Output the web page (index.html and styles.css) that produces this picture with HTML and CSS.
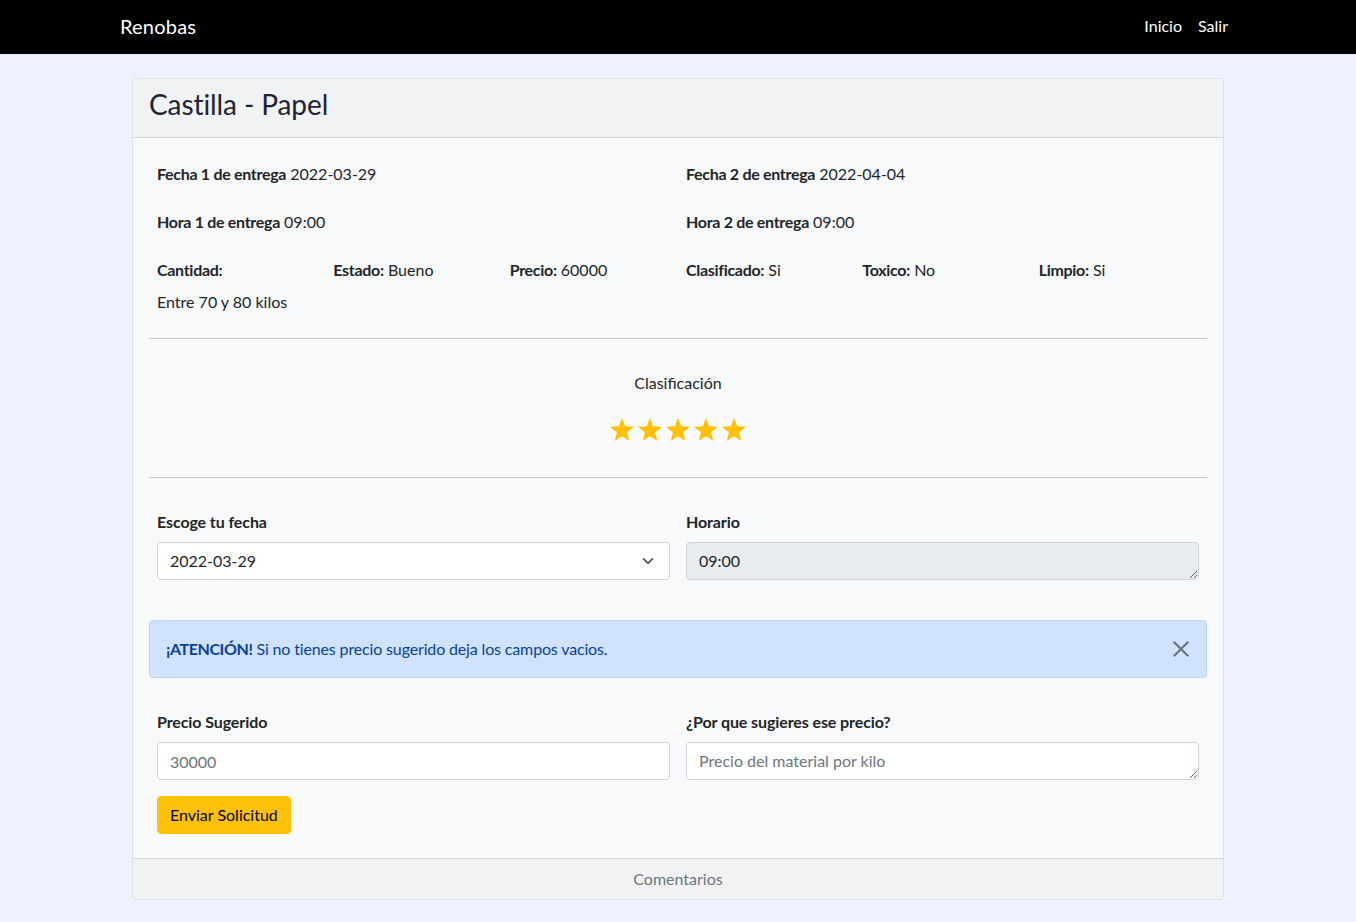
FILE: index.html
```html
<!DOCTYPE html>
<html lang="es">
<head>
<meta charset="utf-8">
<title>Renobas</title>
<link rel="stylesheet" href="styles.css">
</head>
<body>
<nav class="navbar">
  <div class="nav-inner">
    <a class="brand" href="#">Renobas</a>
    <div class="nav-links">
      <a href="#">Inicio</a>
      <a href="#">Salir</a>
    </div>
  </div>
</nav>

<main class="container">
  <section class="card">
    <header class="card-header"><h3>Castilla - Papel</h3></header>
    <div class="card-body">
      <div class="grid-2">
        <div class="cell"><b>Fecha 1 de entrega</b> 2022-03-29</div>
        <div class="cell"><b>Fecha 2 de entrega</b> 2022-04-04</div>
        <div class="cell"><b>Hora 1 de entrega</b> 09:00</div>
        <div class="cell"><b>Hora 2 de entrega</b> 09:00</div>
      </div>
      <div class="grid-6">
        <div class="cell"><b>Cantidad:</b><div class="sub">Entre 70 y 80 kilos</div></div>
        <div class="cell"><b>Estado:</b> Bueno</div>
        <div class="cell"><b>Precio:</b> 60000</div>
        <div class="cell"><b>Clasificado:</b> Si</div>
        <div class="cell"><b>Toxico:</b> No</div>
        <div class="cell"><b>Limpio:</b> Si</div>
      </div>
      <hr class="rule">
      <div class="rating">
        <div class="rating-label">Clasificación</div>
        <div class="stars">
          <svg viewBox="0 0 24 24" class="star"><polygon points="12,1 14.9,8.6 23,9 16.7,14.2 18.8,22.2 12,17.7 5.2,22.2 7.3,14.2 1,9 9.1,8.6"/></svg>
          <svg viewBox="0 0 24 24" class="star"><polygon points="12,1 14.9,8.6 23,9 16.7,14.2 18.8,22.2 12,17.7 5.2,22.2 7.3,14.2 1,9 9.1,8.6"/></svg>
          <svg viewBox="0 0 24 24" class="star"><polygon points="12,1 14.9,8.6 23,9 16.7,14.2 18.8,22.2 12,17.7 5.2,22.2 7.3,14.2 1,9 9.1,8.6"/></svg>
          <svg viewBox="0 0 24 24" class="star"><polygon points="12,1 14.9,8.6 23,9 16.7,14.2 18.8,22.2 12,17.7 5.2,22.2 7.3,14.2 1,9 9.1,8.6"/></svg>
          <svg viewBox="0 0 24 24" class="star"><polygon points="12,1 14.9,8.6 23,9 16.7,14.2 18.8,22.2 12,17.7 5.2,22.2 7.3,14.2 1,9 9.1,8.6"/></svg>
        </div>
      </div>
      <hr class="rule">
      <form class="form">
        <div class="form-row first">
          <div class="field">
            <label class="form-label">Escoge tu fecha</label>
            <div class="select-wrap">
              <select class="form-control select"><option>2022-03-29</option><option>2022-04-04</option></select>
              <svg class="chevron" viewBox="0 0 16 16"><path d="M2 5l6 6 6-6" fill="none" stroke="#343a40" stroke-width="2" stroke-linecap="round" stroke-linejoin="round"/></svg>
            </div>
          </div>
          <div class="field">
            <label class="form-label">Horario</label>
            <textarea class="form-control readonly" rows="1" readonly>09:00</textarea>
          </div>
        </div>

        <div class="alert">
          <span><b>¡ATENCIÓN!</b> Si no tienes precio sugerido deja los campos vacios.</span>
          <button type="button" class="btn-close" aria-label="Cerrar">
            <svg viewBox="0 0 16 16"><path d="M1.5 1.5l13 13M14.5 1.5l-13 13" stroke="#000" stroke-width="1.8" fill="none"/></svg>
          </button>
        </div>

        <div class="form-row">
          <div class="field">
            <label class="form-label">Precio Sugerido</label>
            <input class="form-control" type="text" placeholder="30000">
          </div>
          <div class="field">
            <label class="form-label">¿Por que sugieres ese precio?</label>
            <textarea class="form-control" rows="1" placeholder="Precio del material por kilo"></textarea>
          </div>
        </div>
        <div class="actions">
          <button type="button" class="btn-warning">Enviar Solicitud</button>
        </div>
      </form>
    </div>
    <footer class="card-footer">Comentarios</footer>
  </section>
</main>
</body>
</html>
```
FILE: styles.css
```css
* { box-sizing: border-box; }
html, body { margin: 0; padding: 0; }
body {
  background: #eef1ff;
  font-family: Lato, "Noto Sans", "Liberation Sans", sans-serif;
  font-size: 16px;
  line-height: 24px;
  color: #212529;
}
.navbar {
  background: #000;
  height: 54px;
}
.nav-inner {
  width: 1140px;
  margin: 0 auto;
  padding: 0 12px;
  height: 54px;
  display: flex;
  align-items: center;
  justify-content: space-between;
}
.brand {
  color: #fff;
  text-decoration: none;
  font-size: 20px;
  line-height: 30px;
  margin-top: -2px;
  letter-spacing: 0.2px;
}
.nav-links { display: flex; margin-top: -2px; }
.nav-links a {
  color: #fff;
  text-decoration: none;
  padding: 0 8px;
}
.container {
  width: 1140px;
  margin: 24px auto 0;
  padding: 0 24px;
}
.card {
  background: #f8f9fa;
  border: 1px solid rgba(0,0,0,0.1);
  border-radius: 4px;
}
.card-header {
  background: #f1f2f4;
  border-bottom: 1px solid rgba(0,0,0,0.12);
  padding: 5px 16px 0;
  height: 59px;
}
.card-header h3 {
  margin: 0;
  font-weight: 400;
  font-size: 28px;
  line-height: 40px;
  color: #1e2434;
  letter-spacing: -0.1px;
}
.card-body { padding: 16px 16px 24px; }
.grid-2 {
  display: grid;
  grid-template-columns: 1fr 1fr;
}
.grid-6 {
  display: grid;
  grid-template-columns: repeat(6, 1fr);
}
.cell {
  padding: 8px;
  margin-bottom: 8px;
}
.grid-6 .cell { margin-bottom: 0; padding-bottom: 16px; }
.cell b { font-weight: 700; letter-spacing: -0.3px; }
.sub { margin-top: 8px; }
.rule {
  border: 0;
  border-top: 1px solid #c8c9cb;
  margin: 8px 0 0;
}
.rating {
  text-align: center;
  padding: 32px 0 29px;
}
.rating-label { line-height: 24px; font-size: 16px; }
.stars {
  margin-top: 17px;
  height: 36px;
  display: flex;
  justify-content: center;
  align-items: center;
  gap: 2px;
}
.star { width: 26px; height: 26px; fill: #ffc107; }
.rating + .rule { margin-top: 0; }
.form { padding-top: 32px; }
.form-row {
  display: grid;
  grid-template-columns: 1fr 1fr;
}
.field { padding: 0 8px; }
.form-label {
  display: block;
  font-weight: 700;
  margin-bottom: 8px;
  letter-spacing: -0.1px;
}
.form-control {
  display: block;
  width: 100%;
  height: 38px;
  padding: 6px 12px;
  font: inherit;
  font-size: 16px;
  line-height: 24px;
  color: #212529;
  background: #fff;
  border: 1px solid #ced4da;
  border-radius: 4px;
  outline: none;
}
textarea.form-control { resize: vertical; min-height: 38px; }
.form-control::placeholder { color: #6c757d; opacity: 1; }
.readonly { background: #e9ecef; }
.select-wrap { position: relative; }
.select { appearance: none; -webkit-appearance: none; padding-right: 36px; }
.chevron {
  position: absolute;
  right: 16px;
  top: 13px;
  width: 12px;
  height: 12px;
  pointer-events: none;
}
.alert {
  margin-top: 40px;
  height: 58px;
  background: #cfe2ff;
  border: 1px solid #b6d4fe;
  border-radius: 4px;
  color: #084298;
  padding: 16px 16px;
  display: flex;
  align-items: center;
  justify-content: space-between;
  letter-spacing: -0.15px;
}
.alert b { font-weight: 700; letter-spacing: -0.4px; }
.btn-close {
  border: 0;
  background: none;
  padding: 0;
  width: 18px;
  height: 18px;
  margin-right: 0;
  opacity: 0.5;
  display: flex;
}
.btn-close svg { width: 18px; height: 18px; }
.alert + .form-row { margin-top: 32px; }
.actions { padding: 16px 8px 0; }
.btn-warning {
  background: #ffc107;
  border: 1px solid #ffc107;
  border-radius: 4px;
  color: #000;
  font: inherit;
  font-size: 16px;
  line-height: 24px;
  padding: 6px 12px;
  height: 38px;
}
.card-footer {
  background: #f1f2f4;
  border-top: 1px solid rgba(0,0,0,0.12);
  text-align: center;
  color: #6c757d;
  padding: 8px 16px;
  line-height: 24px;
}
```
